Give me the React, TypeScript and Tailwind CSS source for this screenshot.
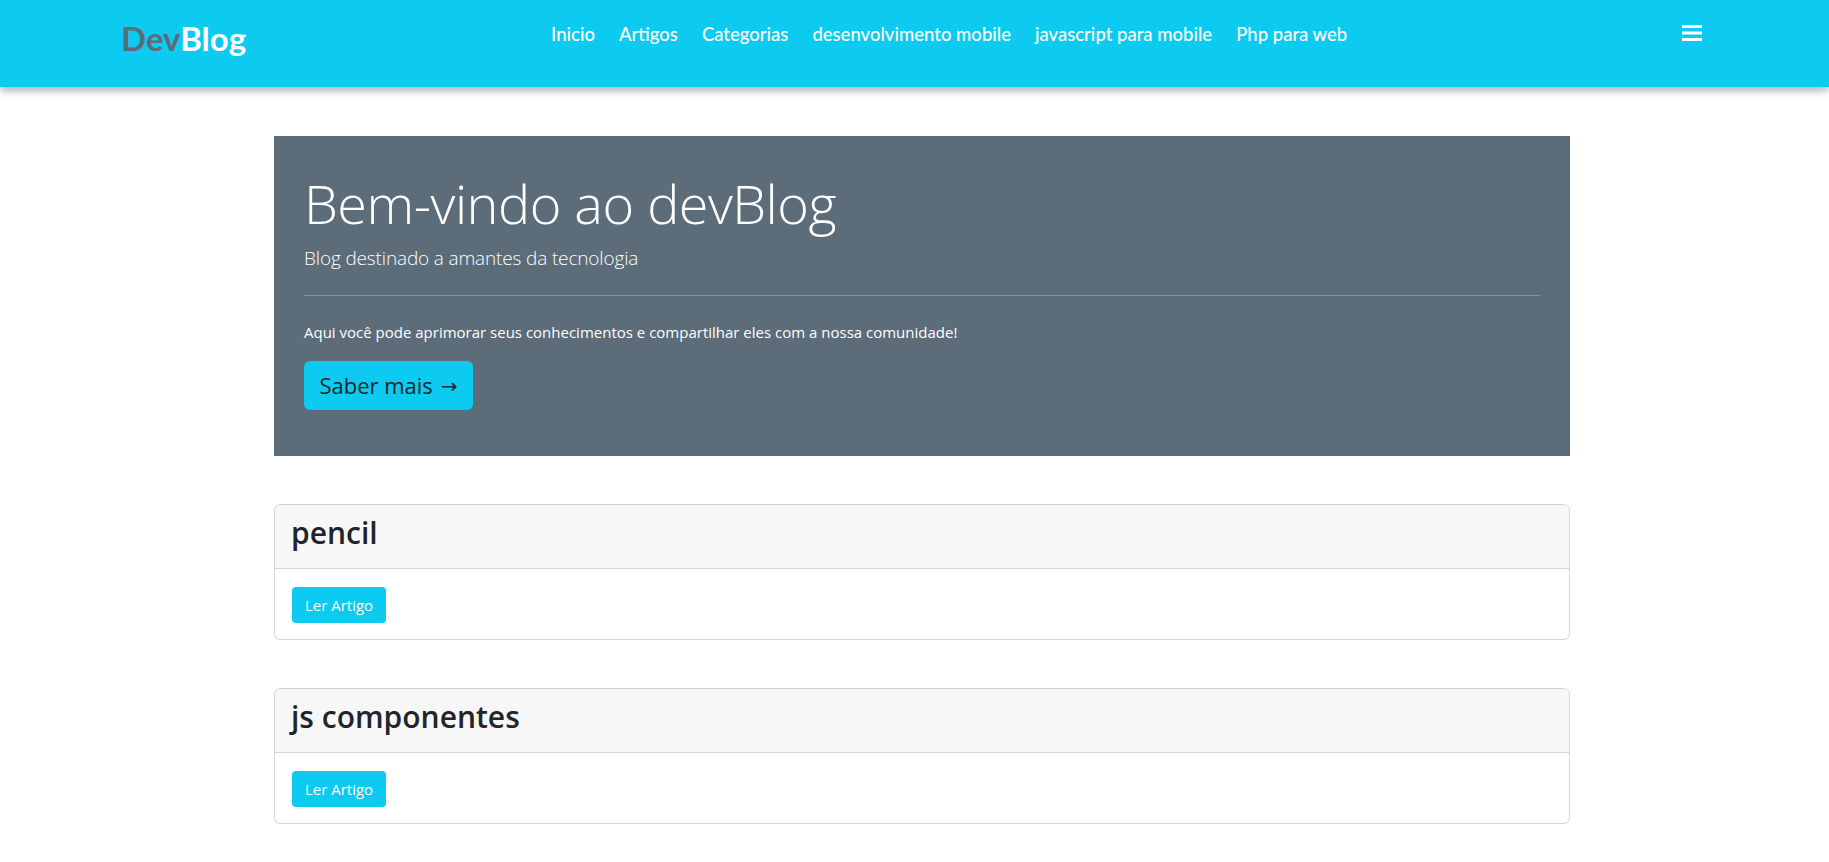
const links = [
  "Inicio",
  "Artigos",
  "Categorias",
  "desenvolvimento mobile",
  "javascript para mobile",
  "Php para web",
];

const posts = ["pencil", "js componentes"];

function Navbar() {
  return (
    <nav className="relative z-10 h-[87px] bg-[#0dcaf0] shadow-[0_4px_8px_rgba(0,0,0,0.3)]">
      <div className="flex items-start pl-[121px] pr-[127px]">
        <a href="#" className="mt-[18px] font-['Lato',sans-serif] text-[33px] font-bold leading-[40px]">
          <span className="text-[#5c6c79]">Dev</span>
          <span className="text-white">Blog</span>
        </a>
        <ul className="ml-[305px] mt-[22px] flex gap-[24px] font-['Lato',sans-serif] text-[18.5px] font-medium leading-6 text-white">
          {links.map((l) => (
            <li key={l}>
              <a href="#">{l}</a>
            </li>
          ))}
        </ul>
        <button className="ml-auto mt-[25px]" aria-label="menu">
          <svg width="20" height="16" viewBox="0 0 20 16" fill="#fff">
            <rect x="0" y="0" width="20" height="3" />
            <rect x="0" y="6.5" width="20" height="3" />
            <rect x="0" y="13" width="20" height="3" />
          </svg>
        </button>
      </div>
    </nav>
  );
}

function PostCard({ title }: { title: string }) {
  return (
    <div className="mt-[48px] overflow-hidden rounded-[6px] border border-[#d4d4d4]">
      <div className="h-[64px] border-b border-[#d4d4d4] bg-[#f7f7f7] px-4 pt-[10px]">
        <h2 className="text-[30px] font-semibold leading-9 text-[#212529]">{title}</h2>
      </div>
      <div className="h-[70px] pl-[17px] pt-[18px]">
        <a
          href="#"
          className="inline-flex h-9 w-[94px] items-center justify-center rounded-[4px] bg-[#0dcaf0] text-[15px] text-white"
        >
          Ler Artigo
        </a>
      </div>
    </div>
  );
}

export default function App() {
  return (
    <div className="min-h-screen bg-white font-['Open_Sans',sans-serif]">
      <Navbar />
      <main className="ml-[274px] w-[1296px] pb-10 pt-[49px]">
        <section className="h-[320px] bg-[#5c6c79] px-[30px] pt-[34px] text-white">
          <h1 className="text-[54px] font-light leading-[67px] tracking-[-0.5px]">Bem-vindo ao devBlog</h1>
          <p className="mt-[6px] text-[19px] font-light leading-[30px] tracking-[-0.15px]">
            Blog destinado a amantes da tecnologia
          </p>
          <hr className="mt-[22px] border-t border-white/25" />
          <p className="mt-6 text-[15px] leading-6">
            Aqui você pode aprimorar seus conhecimentos e compartilhar eles com a nossa comunidade!
          </p>
          <a
            href="#"
            className="mt-[17px] flex h-[49px] w-[169px] items-center justify-center gap-2 rounded-[6px] bg-[#0dcaf0] text-[22px] text-[#212529]"
          >
            Saber mais
            <span className="font-['DejaVu_Sans',sans-serif] text-[20px]">→</span>
          </a>
        </section>
        {posts.map((p) => (
          <PostCard key={p} title={p} />
        ))}
      </main>
    </div>
  );
}
